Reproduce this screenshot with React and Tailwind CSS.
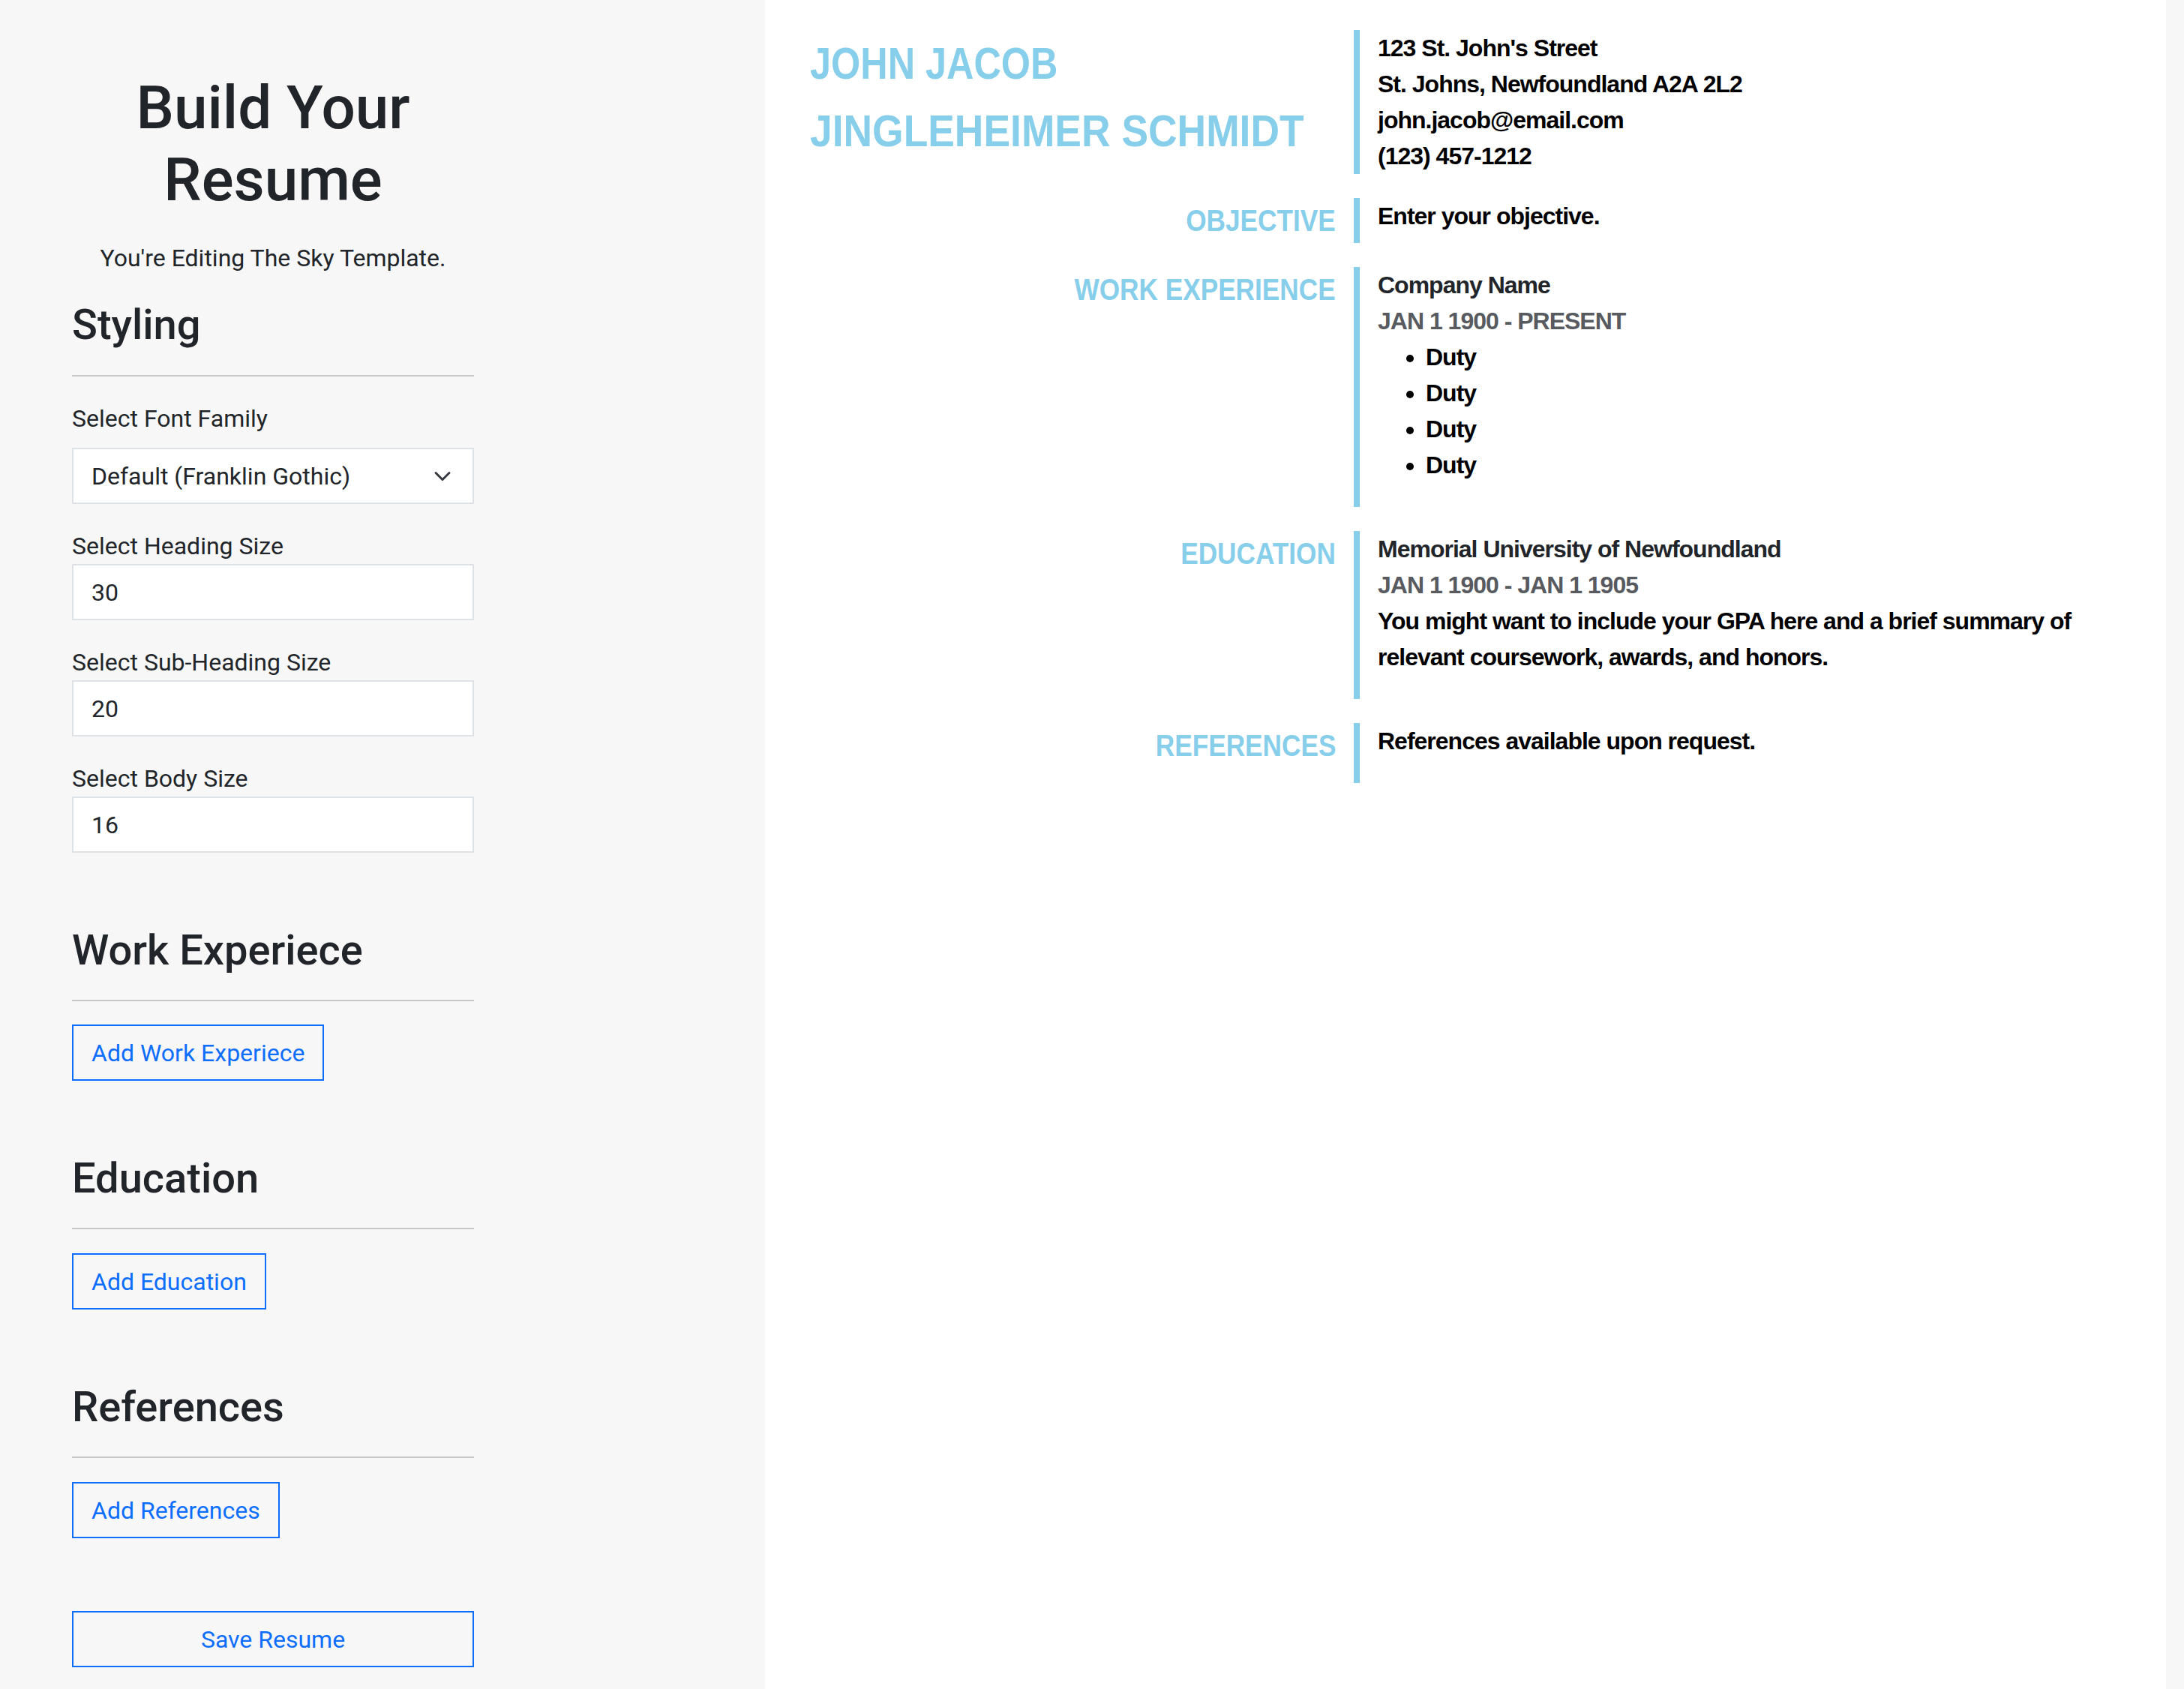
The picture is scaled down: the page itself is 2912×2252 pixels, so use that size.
import { useState } from "react";

const resumeFont = {
  fontFamily:
    '"Franklin Gothic Medium", "Liberation Sans Narrow", "Arial Narrow", "Liberation Sans", Arial, sans-serif',
};

function Field({ label, value, first }) {
  return (
    <div className={first ? "" : "mt-[32px]"}>
      <label className="block text-[32px] leading-[48px] text-[#212529]">{label}</label>
      <input
        defaultValue={value}
        className="mt-0 block w-full h-[75px] bg-white border-2 border-[#dee2e6] px-[24px] text-[32px] text-[#212529] outline-none"
      />
    </div>
  );
}

function SectionHeading({ title }) {
  return (
    <>
      <h3 className="mt-[97px] text-[56px] leading-[67px] font-medium text-[#212529]">{title}</h3>
      <hr className="mt-[32px] border-0 h-[2px] bg-[#c6c7c8]" />
    </>
  );
}

function OutlineButton({ children, full }) {
  return (
    <button
      className={`h-[75px] border-2 border-[#0d6efd] text-[#0d6efd] text-[32px] px-[24px] bg-transparent ${
        full ? "w-full text-center" : "text-left"
      }`}
    >
      {children}
    </button>
  );
}

function ResumeRow({ label, children, className = "" }) {
  return (
    <div className={`flex mb-[32px] ${className}`}>
      <div className="w-[725px] shrink-0 pr-[24px] text-right text-[40px] leading-[60px] font-bold uppercase text-[#87ceeb]">
        <span className="inline-block whitespace-nowrap origin-right scale-x-[0.88]">{label}</span>
      </div>
      <div className="flex-1 border-l-[8px] border-[#87ceeb] pl-[24px] text-[32px] leading-[48px] font-bold tracking-[-1px] text-black">
        {children}
      </div>
    </div>
  );
}

export default function App() {
  const [font] = useState("Default (Franklin Gothic)");

  return (
    <div className="flex min-h-[2252px] bg-[#f7f7f7]" style={{ fontFamily: "Roboto, sans-serif" }}>
      {/* Editor panel */}
      <aside className="w-[1020px] shrink-0 pl-[96px] pt-[96px] pb-[32px]">
        <div className="w-[536px]">
          <h1 className="text-center text-[80px] leading-[96px] font-medium text-[#212529]">
            Build Your
            <br />
            Resume
          </h1>
          <p className="mt-[32px] text-center text-[32px] leading-[48px] text-[#212529]">
            You're Editing The Sky Template.
          </p>

          <h3 className="mt-[32px] text-[56px] leading-[67px] font-medium text-[#212529]">Styling</h3>
          <hr className="mt-[33px] border-0 h-[2px] bg-[#c6c7c8]" />

          <div className="mt-[32px]">
            <label className="block text-[32px] leading-[48px] text-[#212529]">Select Font Family</label>
            <div className="mt-[15px] flex items-center justify-between h-[75px] bg-white border-2 border-[#dee2e6] pl-[24px] pr-[28px] text-[32px] text-[#212529]">
              <span>{font}</span>
              <svg width="24" height="24" viewBox="0 0 16 16" fill="none">
                <path
                  d="m2 5 6 6 6-6"
                  stroke="#343a40"
                  strokeWidth="2"
                  strokeLinecap="round"
                  strokeLinejoin="round"
                />
              </svg>
            </div>
          </div>
          <div className="mt-[32px]">
            <Field label="Select Heading Size" value="30" first />
          </div>
          <Field label="Select Sub-Heading Size" value="20" />
          <Field label="Select Body Size" value="16" />

          <SectionHeading title="Work Experiece" />
          <div className="mt-[31px]">
            <OutlineButton>Add Work Experiece</OutlineButton>
          </div>

          <SectionHeading title="Education" />
          <div className="mt-[32px]">
            <OutlineButton>Add Education</OutlineButton>
          </div>

          <SectionHeading title="References" />
          <div className="mt-[32px]">
            <OutlineButton>Add References</OutlineButton>
          </div>

          <div className="mt-[97px]">
            <OutlineButton full>Save Resume</OutlineButton>
          </div>
        </div>
      </aside>

      {/* Resume preview */}
      <main className="w-[1868px] shrink-0 bg-white pt-[40px] pl-[60px] pr-[60px]" style={resumeFont}>
        <div className="flex mb-[32px]">
          <div className="w-[725px] shrink-0 pr-[24px] text-[60px] leading-[90px] font-bold uppercase text-[#87ceeb]">
            <div className="whitespace-nowrap origin-left scale-x-[0.84]">John Jacob</div>
            <div className="whitespace-nowrap origin-left scale-x-[0.89]">Jingleheimer Schmidt</div>
          </div>
          <div className="flex-1 self-start border-l-[8px] border-[#87ceeb] pl-[24px] text-[32px] leading-[48px] font-bold tracking-[-1px] text-black">
            <div>123 St. John's Street</div>
            <div>St. Johns, Newfoundland A2A 2L2</div>
            <div>john.jacob@email.com</div>
            <div>(123) 457-1212</div>
          </div>
        </div>

        <ResumeRow label="Objective">
          <div>Enter your objective.</div>
        </ResumeRow>

        <ResumeRow label="Work Experience">
          <div className="text-[#212529]">Company Name</div>
          <div className="text-[#575a5e]">JAN 1 1900 - PRESENT</div>
          <ul className="list-disc pl-[64px] mb-[32px]">
            <li>Duty</li>
            <li>Duty</li>
            <li>Duty</li>
            <li>Duty</li>
          </ul>
        </ResumeRow>

        <ResumeRow label="Education">
          <div className="text-[#212529]">Memorial University of Newfoundland</div>
          <div className="text-[#575a5e]">JAN 1 1900 - JAN 1 1905</div>
          <p className="mb-[32px]">
            You might want to include your GPA here and a brief summary of relevant coursework, awards, and
            honors.
          </p>
        </ResumeRow>

        <ResumeRow label="References">
          <p className="mb-[32px]">References available upon request.</p>
        </ResumeRow>
      </main>
    </div>
  );
}
